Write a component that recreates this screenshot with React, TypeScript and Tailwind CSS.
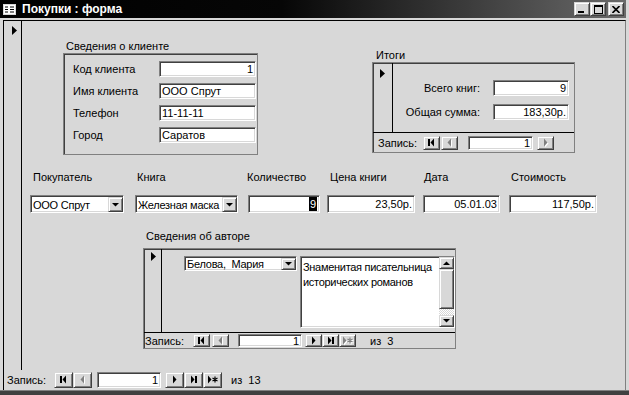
import React from "react";

const raised =
  "bg-[#d8d8d8] border border-t-[#d8d8d8] border-l-[#d8d8d8] border-r-[#404040] border-b-[#404040] shadow-[inset_1px_1px_0_#fff,inset_-1px_-1px_0_#808080]";
const sunken =
  "bg-white border border-t-[#808080] border-l-[#808080] border-r-white border-b-white shadow-[inset_1px_1px_0_#404040,inset_-1px_-1px_0_#d8d8d8]";
const group = "border border-[#808080] shadow-[inset_1px_1px_0_#404040]";

const Current = () => (
  <svg width="5" height="9" viewBox="0 0 5 9">
    <path d="M0 0L5 4.5L0 9Z" fill="#000" />
  </svg>
);

type Kind = "first" | "prev" | "next" | "last" | "new";

const glyph = (kind: Kind, c: string) => {
  switch (kind) {
    case "first":
      return (
        <>
          <rect x="2" y="0" width="2" height="7" fill={c} />
          <path d="M8 -0.5L4.5 3.5L8 7.5Z" fill={c} />
        </>
      );
    case "prev":
      return <path d="M7 -0.5L3.5 3.5L7 7.5Z" fill={c} />;
    case "next":
      return <path d="M4 -0.5L7.5 3.5L4 7.5Z" fill={c} />;
    case "last":
      return (
        <>
          <path d="M3 -0.5L6.5 3.5L3 7.5Z" fill={c} />
          <rect x="7" y="0" width="2" height="7" fill={c} />
        </>
      );
    default:
      return (
        <>
          <path d="M1 -0.5L4.5 3.5L1 7.5Z" fill={c} />
          <path d="M8 0.5V6.5M5.5 2L10.5 5M5.5 5L10.5 2" stroke={c} strokeWidth="1.2" />
        </>
      );
  }
};

function NavBtn({ kind, cls, off }: { kind: Kind; cls: string; off?: boolean }) {
  return (
    <div className={`${raised} ${cls} shrink-0 flex items-center justify-center`}>
      <svg width="11" height="8" viewBox="0 0 11 8" overflow="visible">
        {off && <g transform="translate(1 1)">{glyph(kind, "#fff")}</g>}
        {glyph(kind, off ? "#808080" : "#000")}
      </svg>
    </div>
  );
}

const DownArrow = () => (
  <svg width="7" height="4" viewBox="0 0 7 4">
    <path d="M0 0H7L3.5 3.5Z" fill="#000" />
  </svg>
);

function Combo({ cls, text }: { cls: string; text: string }) {
  return (
    <div className={`${sunken} ${cls} shrink-0 flex pt-[1px] pl-[1px]`}>
      <span className="flex-1 pl-[1px] flex items-center whitespace-pre overflow-hidden tracking-[-0.25px]">{text}</span>
      <div className={`${raised} w-[15px] shrink-0 flex items-center justify-center`}>
        <DownArrow />
      </div>
    </div>
  );
}

function Box({ cls, children, left }: { cls: string; children: React.ReactNode; left?: boolean }) {
  return (
    <div
      className={`${sunken} ${cls} shrink-0 flex items-center whitespace-pre overflow-hidden ${
        left ? "pl-[2px]" : "justify-end pr-[2px]"
      }`}
    >
      {children}
    </div>
  );
}

function TitleBtn({ kind, cls }: { kind: "min" | "max" | "close"; cls?: string }) {
  return (
    <div className={`${raised} w-[16px] h-[14px] flex items-center justify-center ${cls ?? ""}`}>
      {kind === "min" && (
        <svg width="8" height="8" viewBox="0 0 8 8">
          <rect x="0" y="6" width="6" height="2" fill="#000" />
        </svg>
      )}
      {kind === "max" && (
        <svg width="9" height="9" viewBox="0 0 9 9">
          <rect x="0.5" y="0.5" width="8" height="8" fill="none" stroke="#000" />
          <rect x="0" y="0" width="9" height="2" fill="#000" />
        </svg>
      )}
      {kind === "close" && (
        <svg width="8" height="7" viewBox="0 0 8 7">
          <path d="M0.5 0L7.5 7M7.5 0L0.5 7" stroke="#000" strokeWidth="1.6" />
        </svg>
      )}
    </div>
  );
}

const FormIcon = () => (
  <svg width="13" height="11" viewBox="0 0 13 11">
    <rect x="0.5" y="0.5" width="12" height="10" fill="#fff" stroke="#d8d8d8" />
    <path d="M2 3H5M2 5.5H5M2 8H5M7 3H11M7 5.5H11M7 8H11" stroke="#000" />
  </svg>
);

export default function App() {
  return (
    <div className="w-[629px] h-[395px] overflow-hidden bg-[#d8d8d8] flex flex-col font-['Liberation_Sans',Arial,sans-serif] text-[11px] leading-[14px] text-black">
      {/* Title bar */}
      <div className="h-[18px] w-[626px] shrink-0 flex items-center bg-[linear-gradient(to_right,#000_0%,#060606_45%,#6a6a6a_100%)]">
        <div className="ml-[3px] flex">
          <FormIcon />
        </div>
        <span className="ml-[6px] text-white font-bold text-[12px] leading-[18px]">Покупки : форма</span>
        <div className="ml-auto mr-[2px] flex items-center">
          <TitleBtn kind="min" />
          <TitleBtn kind="max" />
          <TitleBtn kind="close" cls="ml-[2px]" />
        </div>
      </div>
      <div className="h-[2px] shrink-0" />

      {/* Window client */}
      <div className="ml-[3px] w-[623px] h-[370px] shrink-0 flex flex-col border-t border-l border-black border-r border-r-[#808080]">
        <div className="h-[349px] flex">
          <div className="w-[18px] shrink-0 border-r border-black pl-[8px] pt-[5px]">
            <Current />
          </div>

          <div className="flex-1 flex flex-col">
            {/* Client + totals */}
            <div className="flex items-start pt-[18px]">
              <div className="ml-[41px] flex flex-col">
                <div className="pl-[3px] h-[14px]">Сведения о клиенте</div>
                <div className={`${group} w-[195px] h-[102px] pt-[7px] flex flex-col gap-[6px]`}>
                  {[
                    ["Код клиента", "1", false],
                    ["Имя клиента", "ООО Спрут", true],
                    ["Телефон", "11-11-11", true],
                    ["Город", "Саратов", true],
                  ].map(([label, value, left]) => (
                    <div key={label as string} className="flex items-center h-[16px]">
                      <span className="pl-[9px] w-[95px] shrink-0">{label}</span>
                      <Box cls="w-[97px] h-[16px]" left={left as boolean}>
                        {value}
                      </Box>
                    </div>
                  ))}
                </div>
              </div>

              <div className="ml-[114px] mt-[9px] flex flex-col">
                <div className="pl-[4px] h-[14px]">Итоги</div>
                <div className={`${group} w-[203px] h-[91px] flex flex-col overflow-hidden`}>
                  <div className="h-[69px] flex">
                    <div className="w-[20px] shrink-0 border-r border-black pl-[7px] pt-[6px]">
                      <Current />
                    </div>
                    <div className="flex flex-col pt-[17px] gap-[8px]">
                      <div className="flex items-center h-[16px]">
                        <span className="w-[87px] shrink-0 text-right">Всего книг:</span>
                        <Box cls="ml-[13px] w-[76px] h-[16px]">9</Box>
                      </div>
                      <div className="flex items-center h-[16px]">
                        <span className="w-[87px] shrink-0 text-right">Общая сумма:</span>
                        <Box cls="ml-[13px] w-[76px] h-[16px]">183,30р.</Box>
                      </div>
                    </div>
                  </div>
                  <div className="h-[20px] border-t border-black flex items-center pl-[5px]">
                    <span className="w-[45px] shrink-0">Запись:</span>
                    <NavBtn kind="first" cls="w-[17px] h-[14px]" />
                    <NavBtn kind="prev" cls="ml-[1px] w-[17px] h-[14px]" off />
                    <Box cls="ml-[10px] w-[65px] h-[14px]">1</Box>
                    <NavBtn kind="next" cls="ml-[4px] w-[17px] h-[14px]" off />
                  </div>
                </div>
              </div>
            </div>

            {/* Purchase row */}
            <div className="flex mt-[15px] h-[14px]">
              <span className="pl-[11px] w-[115px] shrink-0">Покупатель</span>
              <span className="w-[110px] shrink-0">Книга</span>
              <span className="w-[83px] shrink-0">Количество</span>
              <span className="w-[94px] shrink-0">Цена книги</span>
              <span className="w-[87px] shrink-0">Дата</span>
              <span>Стоимость</span>
            </div>
            <div className="flex mt-[11px] h-[18px] pl-[8px]">
              <Combo cls="w-[94px] h-[18px]" text="ООО Спрут" />
              <Combo cls="ml-[11px] w-[103px] h-[18px]" text="Железная маска" />
              <Box cls="ml-[10px] w-[72px] h-[18px]">
                <span className="bg-black text-white px-[1px]">9</span>
              </Box>
              <Box cls="ml-[7px] w-[88px] h-[18px]">23,50р.</Box>
              <Box cls="ml-[8px] w-[77px] h-[18px]">05.01.03</Box>
              <Box cls="ml-[9px] w-[88px] h-[18px]">117,50р.</Box>
            </div>

            {/* Author subform */}
            <div className="ml-[121px] mt-[16px] flex flex-col">
              <div className="pl-[3px] h-[19px]">Сведения об авторе</div>
              <div className={`${group} w-[313px] h-[101px] flex flex-col`}>
                <div className="h-[83px] flex">
                  <div className="w-[18px] shrink-0 border-r border-black pl-[7px] pt-[3px]">
                    <Current />
                  </div>
                  <Combo cls="ml-[22px] mt-[7px] w-[113px] h-[15px]" text="Белова,  Мария" />
                  <div className={`${sunken} ml-[3px] mt-[7px] w-[155px] h-[72px] shrink-0 flex`}>
                    <div className="flex-1 pl-[2px] pt-[3px] leading-[15px] tracking-[-0.3px] whitespace-nowrap overflow-hidden">
                      Знаменитая писательница
                      <br />
                      исторических романов
                    </div>
                    <div className="w-[15px] shrink-0 flex flex-col">
                      <div className={`${raised} h-[12px] flex items-center justify-center`}>
                        <svg width="7" height="4" viewBox="0 0 7 4">
                          <path d="M0 4H7L3.5 0.5Z" fill="#000" />
                        </svg>
                      </div>
                      <div className={`${raised} h-[40px]`} />
                      <div className="flex-1 bg-[repeating-conic-gradient(#fff_0_25%,#d8d8d8_0_50%)] bg-[length:2px_2px]" />
                      <div className={`${raised} h-[12px] flex items-center justify-center`}>
                        <DownArrow />
                      </div>
                    </div>
                  </div>
                </div>
                <div className="h-[16px] border-t border-black flex items-center pl-[1px]">
                  <span className="w-[48px] shrink-0">Запись:</span>
                  <NavBtn kind="first" cls="w-[17px] h-[13px]" />
                  <NavBtn kind="prev" cls="ml-[2px] w-[17px] h-[13px]" off />
                  <Box cls="ml-[9px] w-[64px] h-[13px]">1</Box>
                  <NavBtn kind="next" cls="ml-[3px] w-[17px] h-[13px]" />
                  <NavBtn kind="last" cls="w-[17px] h-[13px]" />
                  <NavBtn kind="new" cls="w-[17px] h-[13px]" off />
                  <span className="ml-[14px]">из&nbsp;&nbsp;3</span>
                </div>
              </div>
            </div>
          </div>
        </div>

        {/* Main record navigator */}
        <div className="h-[20px] flex items-center pl-[3px]">
          <span className="w-[47px] shrink-0">Запись:</span>
          <NavBtn kind="first" cls="w-[19px] h-[16px]" />
          <NavBtn kind="prev" cls="w-[19px] h-[16px]" off />
          <Box cls="ml-[5px] w-[64px] h-[16px]">1</Box>
          <NavBtn kind="next" cls="ml-[4px] w-[19px] h-[16px]" />
          <NavBtn kind="last" cls="w-[19px] h-[16px]" />
          <NavBtn kind="new" cls="w-[19px] h-[16px]" />
          <span className="ml-[9px]">из&nbsp;&nbsp;13</span>
        </div>
      </div>

      <div className="flex-1 bg-[#404040] border-t border-[#808080]" />
    </div>
  );
}
